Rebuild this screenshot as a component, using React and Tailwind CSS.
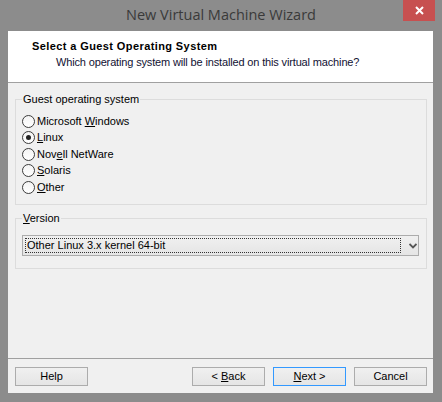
import React from "react";

const U = ({ children }) => <span className="underline underline-offset-[1px]">{children}</span>;

function Radio({ checked, children }) {
  return (
    <div className="flex h-[16.5px] items-center">
      <span className="ml-[6px] flex h-[13px] w-[13px] items-center justify-center rounded-full border border-[#3c3c3c] bg-[linear-gradient(#f4f4f4,#ffffff)]">
        {checked && <span className="h-[5px] w-[5px] rounded-full bg-[#222222]" />}
      </span>
      <span className="ml-[2px] leading-[13px]">{children}</span>
    </div>
  );
}

function Btn({ children, focused }) {
  return (
    <div
      className={
        "flex h-[19px] w-[73px] items-center justify-center border bg-[linear-gradient(#f0f0f0,#e5e5e5)] leading-[13px] " +
        (focused ? "border-[#3399ff]" : "border-[#acacac]")
      }
    >
      <span className="whitespace-pre">{children}</span>
    </div>
  );
}

export default function App() {
  return (
    <div
      className="flex h-[402px] w-[442px] flex-col bg-[#8c8c8c] text-[11px] text-black"
      style={{ fontFamily: '"Liberation Sans", Arial, sans-serif' }}
    >
      {/* title bar */}
      <div className="relative flex h-[31px] items-start">
        <div
          className="absolute inset-x-0 top-[5px] text-center text-[14.5px] leading-[20px] text-[#3a3a3a]"
          style={{ fontFamily: '"Open Sans", "Noto Sans", sans-serif' }}
        >
          New Virtual Machine Wizard
        </div>
        <div className="relative ml-auto mr-[7px] flex h-[21px] w-[32px] items-center justify-center bg-[#c75050]">
          <svg width="9" height="9" viewBox="0 0 9 9">
            <path d="M1 1 L8 8 M8 1 L1 8" stroke="#ffffff" strokeWidth="2" />
          </svg>
        </div>
      </div>

      {/* client */}
      <div className="ml-[8px] flex h-[362px] w-[425px] flex-col bg-[#f0f0f0]">
        <div className="h-[52px] border-b border-[#a0a0a0] bg-white">
          <div className="ml-[24px] mt-[9px] font-bold leading-[13px] tracking-[0.4px]">
            Select a Guest Operating System
          </div>
          <div className="ml-[48px] mt-[3px] leading-[13px] tracking-[-0.15px] text-[#111133]">
            Which operating system will be installed on this virtual machine?
          </div>
        </div>

        <div className="relative ml-[7px] mr-[6px] mt-[16px] h-[106px] border border-[#dcdcdc]">
          <div className="absolute left-[6px] top-[-7px] bg-[#f0f0f0] px-[1px] leading-[13px]">Guest operating system</div>
          <div className="pt-[13px]">
            <Radio>
              Microsoft <U>W</U>indows
            </Radio>
            <Radio checked>
              <U>L</U>inux
            </Radio>
            <Radio>
              Nov<U>e</U>ll NetWare
            </Radio>
            <Radio>
              <U>S</U>olaris
            </Radio>
            <Radio>
              <U>O</U>ther
            </Radio>
          </div>
        </div>

        <div className="relative ml-[7px] mr-[6px] mt-[13px] h-[51px] border border-[#dcdcdc]">
          <div className="absolute left-[6px] top-[-7px] bg-[#f0f0f0] px-[1px] leading-[13px]">
            <U>V</U>ersion
          </div>
          <div className="ml-[6px] mt-[16px] flex h-[21px] w-[397px] items-center border border-[#acacac] bg-[linear-gradient(#f0f0f0,#e5e5e5)]">
            <div className="ml-[2px] flex h-[15px] w-[376px] items-center border border-dotted border-[#333333] pl-[1px] leading-[13px]">
              Other Linux 3.x kernel 64-bit
            </div>
            <svg className="ml-[8px]" width="8" height="6" viewBox="0 0 8 6">
              <path d="M0.5 1 L4 4.5 L7.5 1" stroke="#555555" strokeWidth="1.8" fill="none" />
            </svg>
          </div>
        </div>

        <div className="mt-auto h-[35px] border-t border-[#a0a0a0]">
          <div className="mt-[8px] flex items-center pl-[7px]">
            <Btn>Help</Btn>
            <div className="ml-auto mr-[6px] flex gap-[8px]">
              <Btn>
                {"< "}
                <U>B</U>
                {"ack"}
              </Btn>
              <Btn focused>
                <U>N</U>
                {"ext >"}
              </Btn>
              <Btn>Cancel</Btn>
            </div>
          </div>
        </div>
      </div>
    </div>
  );
}
